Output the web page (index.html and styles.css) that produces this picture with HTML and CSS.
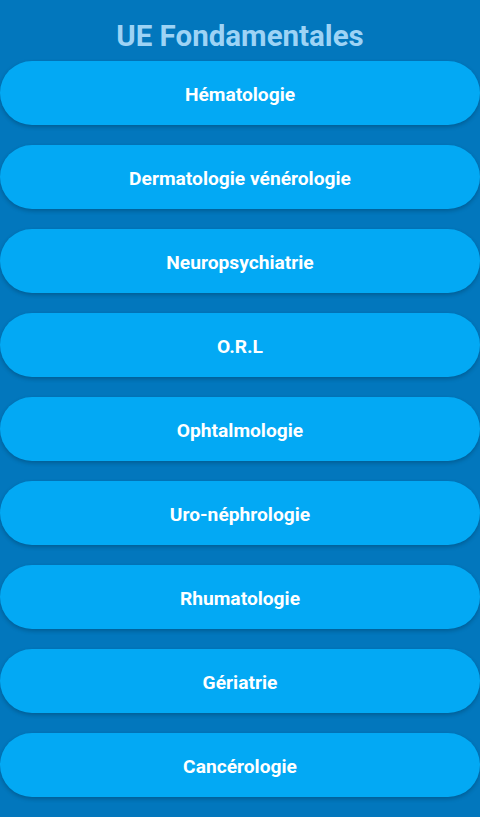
FILE: index.html
```html
<!DOCTYPE html>
<html lang="fr">
<head>
<meta charset="utf-8">
<title>UE Fondamentales</title>
<link rel="stylesheet" href="styles.css">
</head>
<body>
<main class="screen">
  <h1 class="title">UE Fondamentales</h1>
  <nav class="list">
    <button class="item">Hématologie</button>
    <button class="item">Dermatologie vénérologie</button>
    <button class="item">Neuropsychiatrie</button>
    <button class="item">O.R.L</button>
    <button class="item">Ophtalmologie</button>
    <button class="item">Uro-néphrologie</button>
    <button class="item">Rhumatologie</button>
    <button class="item">Gériatrie</button>
    <button class="item">Cancérologie</button>
  </nav>
</main>
</body>
</html>
```
FILE: styles.css
```css
html, body {
  margin: 0;
  padding: 0;
  background: #0277bd;
}
body {
  font-family: Roboto, "Noto Sans", sans-serif;
  height: 817px;
  overflow: hidden;
}
.screen {
  display: flex;
  flex-direction: column;
}
.title {
  margin: 0;
  height: 61px;
  padding-top: 10px;
  box-sizing: border-box;
  display: flex;
  align-items: center;
  justify-content: center;
  font-size: 29.5px;
  font-weight: 700;
  color: #9dd3f5;
}
.list {
  display: flex;
  flex-direction: column;
  gap: 20px;
}
.item {
  height: 64px;
  border: none;
  border-radius: 32px;
  background: #03a9f4;
  color: #ffffff;
  font-family: Roboto, "Noto Sans", sans-serif;
  font-size: 19.2px;
  font-weight: 700;
  box-shadow: 0 2px 4px rgba(0, 0, 0, 0.22);
  padding: 2px 0 0;
  width: 100%;
}
```
